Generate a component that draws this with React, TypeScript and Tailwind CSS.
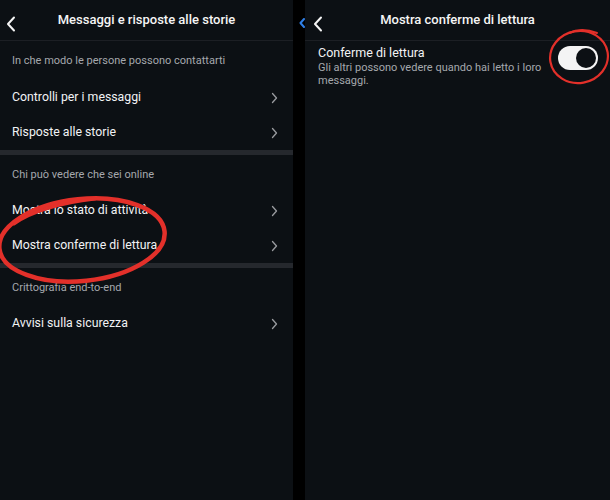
import React from "react";

const font = { fontFamily: "Roboto, 'Noto Sans', sans-serif" };

function Chevron() {
  return (
    <svg width="7" height="12" viewBox="0 0 7 12" className="shrink-0">
      <path d="M1.5 1.5 L5.5 6 L1.5 10.5" fill="none" stroke="#9a9ca0" strokeWidth="1.3" strokeLinecap="round" strokeLinejoin="round" />
    </svg>
  );
}

function BackChevron({ color = "#f5f5f5" }: { color?: string }) {
  return (
    <svg width="10" height="16" viewBox="0 0 10 16">
      <path d="M8 1.5 L2 8 L8 14.5" fill="none" stroke={color} strokeWidth="2" strokeLinecap="round" strokeLinejoin="round" />
    </svg>
  );
}

function SectionLabel({ text, h }: { text: string; h: string }) {
  return (
    <div className={`flex items-center px-3 pt-[2px] text-[11px] text-[#a5a8ad] ${h}`}>{text}</div>
  );
}

function Row({ text }: { text: string }) {
  return (
    <div className="flex h-[35px] items-center justify-between pl-3 pr-[15px] text-[12.3px] text-[#f2f3f5]">
      <span>{text}</span>
      <Chevron />
    </div>
  );
}

function Divider() {
  return <div className="h-[5px] bg-[#25282d]" />;
}

function LeftScreen() {
  return (
    <div className="relative h-[500px] w-[293px] shrink-0 bg-[#0c1014]">
      <div className="relative flex h-[41px] items-center justify-center border-b border-[#1c1f24]">
        <div className="absolute left-[6px] top-[16px]">
          <BackChevron />
        </div>
        <span className="text-[13px] font-medium text-[#f5f5f5]">Messaggi e risposte alle storie</span>
      </div>
      <SectionLabel text="In che modo le persone possono contattarti" h="h-[39px]" />
      <Row text="Controlli per i messaggi" />
      <Row text="Risposte alle storie" />
      <Divider />
      <SectionLabel text="Chi può vedere che sei online" h="h-[38px]" />
      <Row text="Mostra lo stato di attività" />
      <Row text="Mostra conferme di lettura" />
      <Divider />
      <SectionLabel text="Crittografia end-to-end" h="h-[38px]" />
      <Row text="Avvisi sulla sicurezza" />

      <svg className="pointer-events-none absolute left-0 top-0" width="293" height="500">
        <ellipse cx="82" cy="240" rx="83" ry="41" fill="none" stroke="#e3302a" strokeWidth="4.5" transform="rotate(-6 82 240)" />
        <path d="M14 224 C 30 212, 60 203, 95 199" fill="none" stroke="#e3302a" strokeWidth="3" strokeLinecap="round" />
      </svg>
    </div>
  );
}

function Toggle() {
  return (
    <div className="flex h-[24px] w-[40px] items-center justify-end rounded-full bg-[#f4f4f4] pr-[2px]">
      <div className="h-[20px] w-[20px] rounded-full bg-[#0c1014]" />
    </div>
  );
}

function RightScreen() {
  return (
    <div className="relative h-[500px] flex-1 bg-[#0c1014]">
      <div className="relative flex h-[41px] items-center justify-center border-b border-[#1c1f24]">
        <div className="absolute left-[8px] top-[16px]">
          <BackChevron />
        </div>
        <span className="text-[13px] font-medium text-[#f5f5f5]">Mostra conferme di lettura</span>
      </div>
      <div className="flex items-start justify-between pl-[13px] pr-[12px] pt-[4px]">
        <div className="flex flex-col">
          <span className="text-[12.5px] leading-[16px] text-[#f2f3f5]">Conferme di lettura</span>
          <span className="w-[232px] text-[11px] leading-[13px] text-[#a5a8ad]">
            Gli altri possono vedere quando hai letto i loro messaggi.
          </span>
        </div>
        <div className="mt-[1px]">
          <Toggle />
        </div>
      </div>
      <svg className="pointer-events-none absolute left-0 top-0" width="305" height="120">
        <ellipse cx="274" cy="57" rx="29" ry="26" fill="none" stroke="#e3302a" strokeWidth="2.2" transform="rotate(-10 274 57)" />
        <path d="M264 33 C 272 29, 282 29, 292 33" fill="none" stroke="#e3302a" strokeWidth="2" strokeLinecap="round" />
      </svg>
    </div>
  );
}

export default function App() {
  return (
    <div className="flex h-[500px] w-[610px] overflow-hidden bg-black" style={font}>
      <LeftScreen />
      <div className="relative w-[12px] shrink-0 bg-black">
        <svg className="absolute left-[6px] top-[18px]" width="6" height="10" viewBox="0 0 6 10">
          <path d="M5 1 L1.5 5 L5 9" fill="none" stroke="#2f7fe6" strokeWidth="2" strokeLinecap="round" strokeLinejoin="round" />
        </svg>
      </div>
      <RightScreen />
    </div>
  );
}
